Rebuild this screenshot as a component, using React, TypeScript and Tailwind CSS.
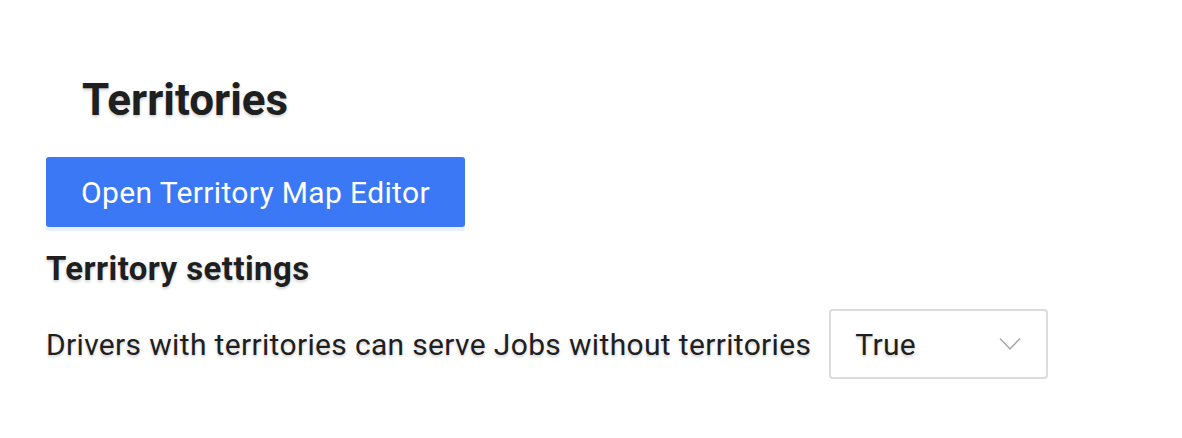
import type { FC } from 'react';

const Chevron: FC = () => (
  <svg width="22" height="14" viewBox="0 0 22 14" fill="none" className="text-[#a6a6a6]">
    <path d="M1 1.5 L11 12 L21 1.5" stroke="currentColor" strokeWidth="1.5" />
  </svg>
);

export default function App() {
  return (
    <div className="min-h-[438px] w-[1182px] bg-white font-['Roboto',sans-serif] text-[#1f1f1f] [text-shadow:0_2px_3px_rgba(0,0,0,0.18)]">
      <div className="flex flex-col items-start pl-[46px] pt-[70px]">
        <h1 className="ml-[36px] text-[44px] font-bold leading-[60px]">Territories</h1>
        <button
          type="button"
          className="mt-[27px] h-[70px] w-[419px] rounded-[3px] bg-[#3b78f5] text-[30px] tracking-[0.35px] text-white shadow-[0_4px_0_#e8f0fe]"
        >
          Open Territory Map Editor
        </button>
        <h2 className="mt-[22px] text-[33px] font-bold tracking-[0.4px] leading-[40px]">Territory settings</h2>
        <div className="mt-[20px] flex items-center gap-[18px]">
          <span className="text-[30px] tracking-[0.34px]">Drivers with territories can serve Jobs without territories</span>
          <div className="flex h-[70px] w-[219px] items-center justify-between rounded-[4px] border-2 border-[#dcdcdc] pl-[24px] pr-[25px]">
            <span className="text-[30px] tracking-[0.3px]">True</span>
            <Chevron />
          </div>
        </div>
      </div>
    </div>
  );
}
